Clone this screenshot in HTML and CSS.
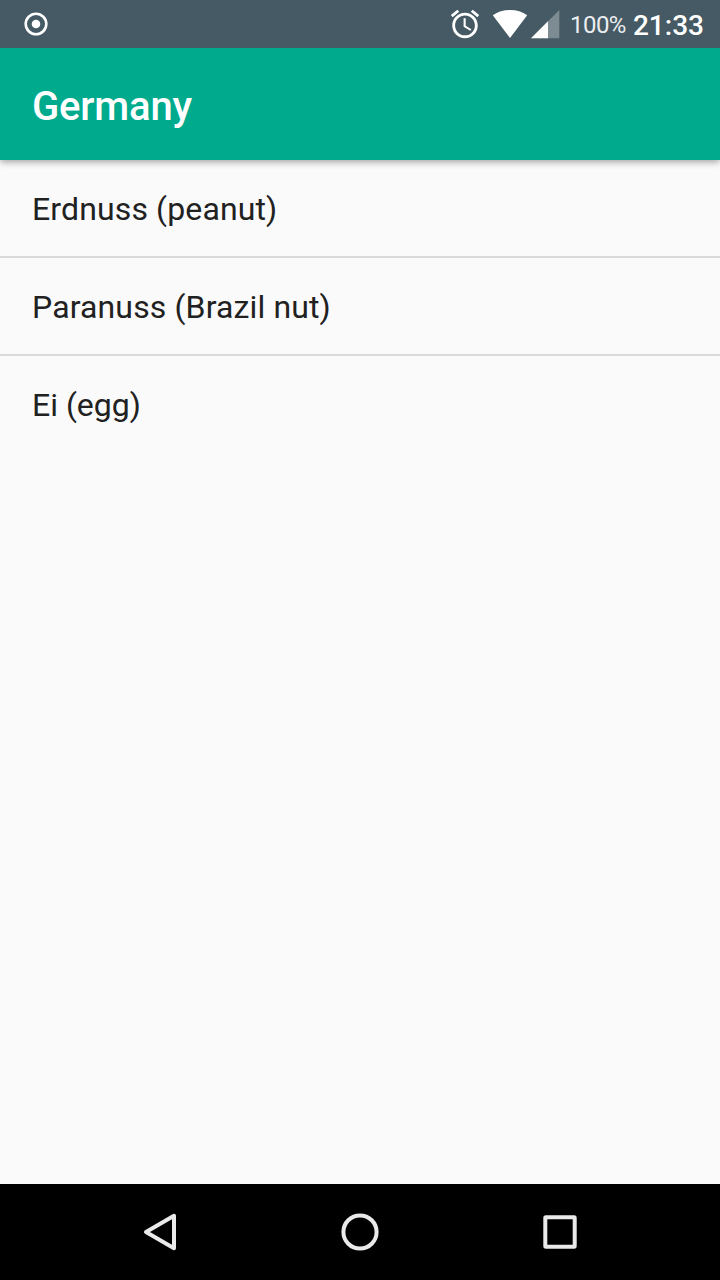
FILE: index.html
```html
<!DOCTYPE html>
<html lang="en">
<head>
<meta charset="utf-8">
<title>Germany</title>
<link rel="stylesheet" href="styles.css">
</head>
<body>
<div class="screen">
  <header class="status">
    <svg class="record" width="24" height="24" viewBox="0 0 24 24"><circle cx="12" cy="12" r="10.300" fill="none" stroke="#fff" stroke-width="2.600"/><circle cx="12" cy="12" r="4.300" fill="#fff"/></svg>
    <div class="indicators">
      <svg class="alarm" width="34" height="34" viewBox="0 0 24 24"><path fill="#fff" d="M22 5.720l-4.600-3.860-1.290 1.530 4.600 3.860L22 5.720zM7.880 3.390L6.600 1.860 2 5.710l1.290 1.530 4.590-3.850zM12.500 8H11v6l4.750 2.850.75-1.230-4-2.370V8zM12 4c-4.970 0-9 4.030-9 9s4.020 9 9 9c4.970 0 9-4.030 9-9s-4.030-9-9-9zm0 16c-3.870 0-7-3.130-7-7s3.130-7 7-7 7 3.130 7 7-3.130 7-7 7z"/></svg>
      <svg class="wifi" width="36" height="30" viewBox="0 0 36 30"><path fill="#fff" d="M.8 6.200Q8 1 18 1t17.200 5.200L18 29z"/></svg>
      <svg class="signal" width="30" height="30" viewBox="0 0 30 30"><path fill="#fff" fill-opacity=".3" d="M1 29.300L29.300 1v28.300z"/><path fill="#fff" d="M1 29.300L18 12.300v17z"/></svg>
      <span class="battery">100%</span>
      <span class="clock">21:33</span>
    </div>
  </header>
  <div class="toolbar"><h1 class="title">Germany</h1></div>
  <ul class="list">
    <li class="item">Erdnuss (peanut)</li>
    <li class="item">Paranuss (Brazil nut)</li>
    <li class="item">Ei (egg)</li>
  </ul>
  <nav class="navbar">
    <svg width="40" height="40" viewBox="0 0 40 40"><path class="line" d="M6 20L34 3.800v32.400z"/></svg>
    <svg width="40" height="40" viewBox="0 0 40 40"><circle class="line" cx="20" cy="20" r="16.600"/></svg>
    <svg width="40" height="40" viewBox="0 0 40 40"><rect class="line" x="5.300" y="5.300" width="29.400" height="29.400" rx=".6"/></svg>
  </nav>
</div>
</body>
</html>
```
FILE: styles.css
```css
body { margin: 0; }
.screen { width: 720px; height: 1280px; display: flex; flex-direction: column; background: #fafafa; font-family: Roboto, sans-serif; color: #212121; }
svg { display: block; flex: none; }
.status { height: 48px; flex: none; display: flex; align-items: center; justify-content: space-between; padding: 0 16px 0 24px; box-sizing: border-box; background: #455a64; color: #fff; }
.indicators { display: flex; align-items: center; height: 48px; }
.wifi { margin-left: 10px; }
.signal { margin-left: 2px; }
.battery { margin-left: 10px; font-size: 24px; line-height: 48px; padding-top: 2px; letter-spacing: -.5px; opacity: .9; }
.clock { margin-left: 7px; font-size: 28px; font-weight: 500; line-height: 48px; padding-top: 4px; }
.toolbar { height: 112px; flex: none; display: flex; align-items: center; padding: 6px 32px 0; box-sizing: border-box; background: #00aa8d; box-shadow: 0 2px 7px rgba(0,0,0,.36); clip-path: inset(0 0 -12px); }
.title { margin: 0; font-size: 40px; line-height: 48px; font-weight: 500; letter-spacing: -.15px; color: #fff; }
.list { flex: 1; margin: 0; padding: 0; list-style: none; }
.item { height: 96px; padding: 0 32px; font-size: 32px; line-height: 98px; letter-spacing: .13px; border-bottom: 2px solid #dadada; }
.item:last-child { border-bottom: 0; letter-spacing: 0; }
.navbar { height: 96px; flex: none; display: flex; align-items: center; justify-content: center; gap: 160px; background: #000; }
.line { fill: none; stroke: #eaeaea; stroke-width: 4; stroke-linejoin: round; }
```
